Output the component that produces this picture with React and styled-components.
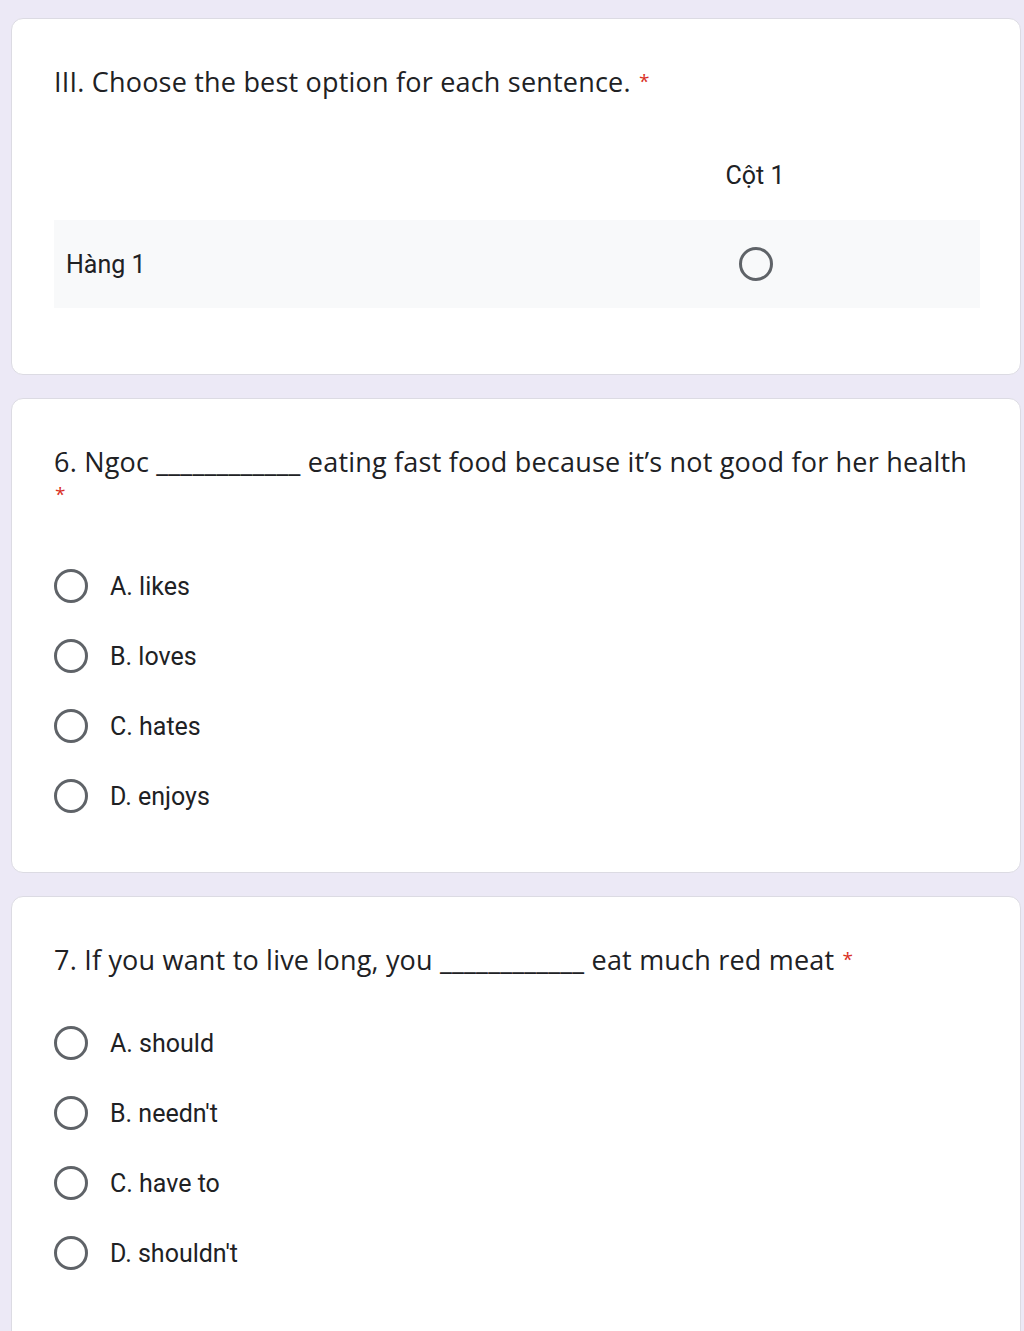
import React from 'react';
import styled, { createGlobalStyle } from 'styled-components';

const GlobalStyle = createGlobalStyle`
  html, body {
    margin: 0;
    padding: 0;
    background: #ece9f6;
  }
`;

const Page = styled.div`
  display: flex;
  flex-direction: column;
  gap: 23px;
  padding: 18px 3px 0 11px;
  min-height: 1331px;
  box-sizing: border-box;
  background: #ece9f6;
`;

const Card = styled.div`
  background: #fff;
  border: 1px solid #dcdbe3;
  border-radius: 12px;
  padding: ${p => p.$pad || '46px 40px 41px 42px'};
  box-sizing: border-box;
`;

const Title = styled.div`
  font-family: "Open Sans", "Liberation Sans", sans-serif;
  font-size: 27px;
  line-height: 33px;
  color: #202124;
  letter-spacing: 0.2px;
`;

const Star = styled.span`
  color: #d93025;
  font-size: 19px;
  margin-left: 1px;
  vertical-align: 4px;
`;

const Grid = styled.div`
  display: grid;
  grid-template-columns: 1fr 450px;
  margin-top: 52px;
`;

const ColHead = styled.div`
  height: 50px;
  display: flex;
  align-items: center;
  justify-content: center;
  font-family: Roboto, "Liberation Sans", sans-serif;
  font-size: 25px;
  color: #202124;
`;

const RowLabel = styled.div`
  margin-top: 20px;
  height: 88px;
  background: #f8f9fa;
  display: flex;
  align-items: center;
  padding-left: 12px;
  font-family: Roboto, "Liberation Sans", sans-serif;
  font-size: 25px;
  color: #202124;
`;

const RowCell = styled.div`
  margin-top: 20px;
  height: 88px;
  background: #f8f9fa;
  display: flex;
  align-items: center;
  justify-content: center;
  padding-left: 2px;
`;

const Radio = styled.span`
  display: inline-block;
  width: 34px;
  height: 34px;
  border: 3px solid #5f6368;
  border-radius: 50%;
  box-sizing: border-box;
  flex-shrink: 0;
`;

const Options = styled.div`
  display: flex;
  flex-direction: column;
  margin-top: ${p => p.$top}px;
`;

const Option = styled.label`
  display: flex;
  align-items: center;
  gap: 22px;
  height: 70px;
  font-family: Roboto, "Liberation Sans", sans-serif;
  font-size: 25px;
  color: #202124;
`;

const questions = [
  {
    title: "6. Ngoc ____________ eating fast food because it’s not good for her health",
    options: ["A. likes", "B. loves", "C. hates", "D. enjoys"],
    top: 40,
    pad: '46px 40px 41px 42px',
  },
  {
    title: "7. If you want to live long, you ____________ eat much red meat",
    options: ["A. should", "B. needn't", "C. have to", "D. shouldn't"],
    top: 32,
    pad: '46px 40px 60px 42px',
  },
];

const App = () => {
  return (
    <>
      <GlobalStyle />
      <Page>
        <Card $pad="46px 40px 66px 42px">
          <Title>
            III. Choose the best option for each sentence. <Star>*</Star>
          </Title>
          <Grid>
            <div />
            <ColHead>Cột 1</ColHead>
            <RowLabel>Hàng 1</RowLabel>
            <RowCell>
              <Radio />
            </RowCell>
          </Grid>
        </Card>
        {questions.map(q => (
          <Card key={q.title} $pad={q.pad}>
            <Title>
              {q.title} <Star>*</Star>
            </Title>
            <Options $top={q.top}>
              {q.options.map(o => (
                <Option key={o}>
                  <Radio />
                  {o}
                </Option>
              ))}
            </Options>
          </Card>
        ))}
      </Page>
    </>
  );
};

export default App;
